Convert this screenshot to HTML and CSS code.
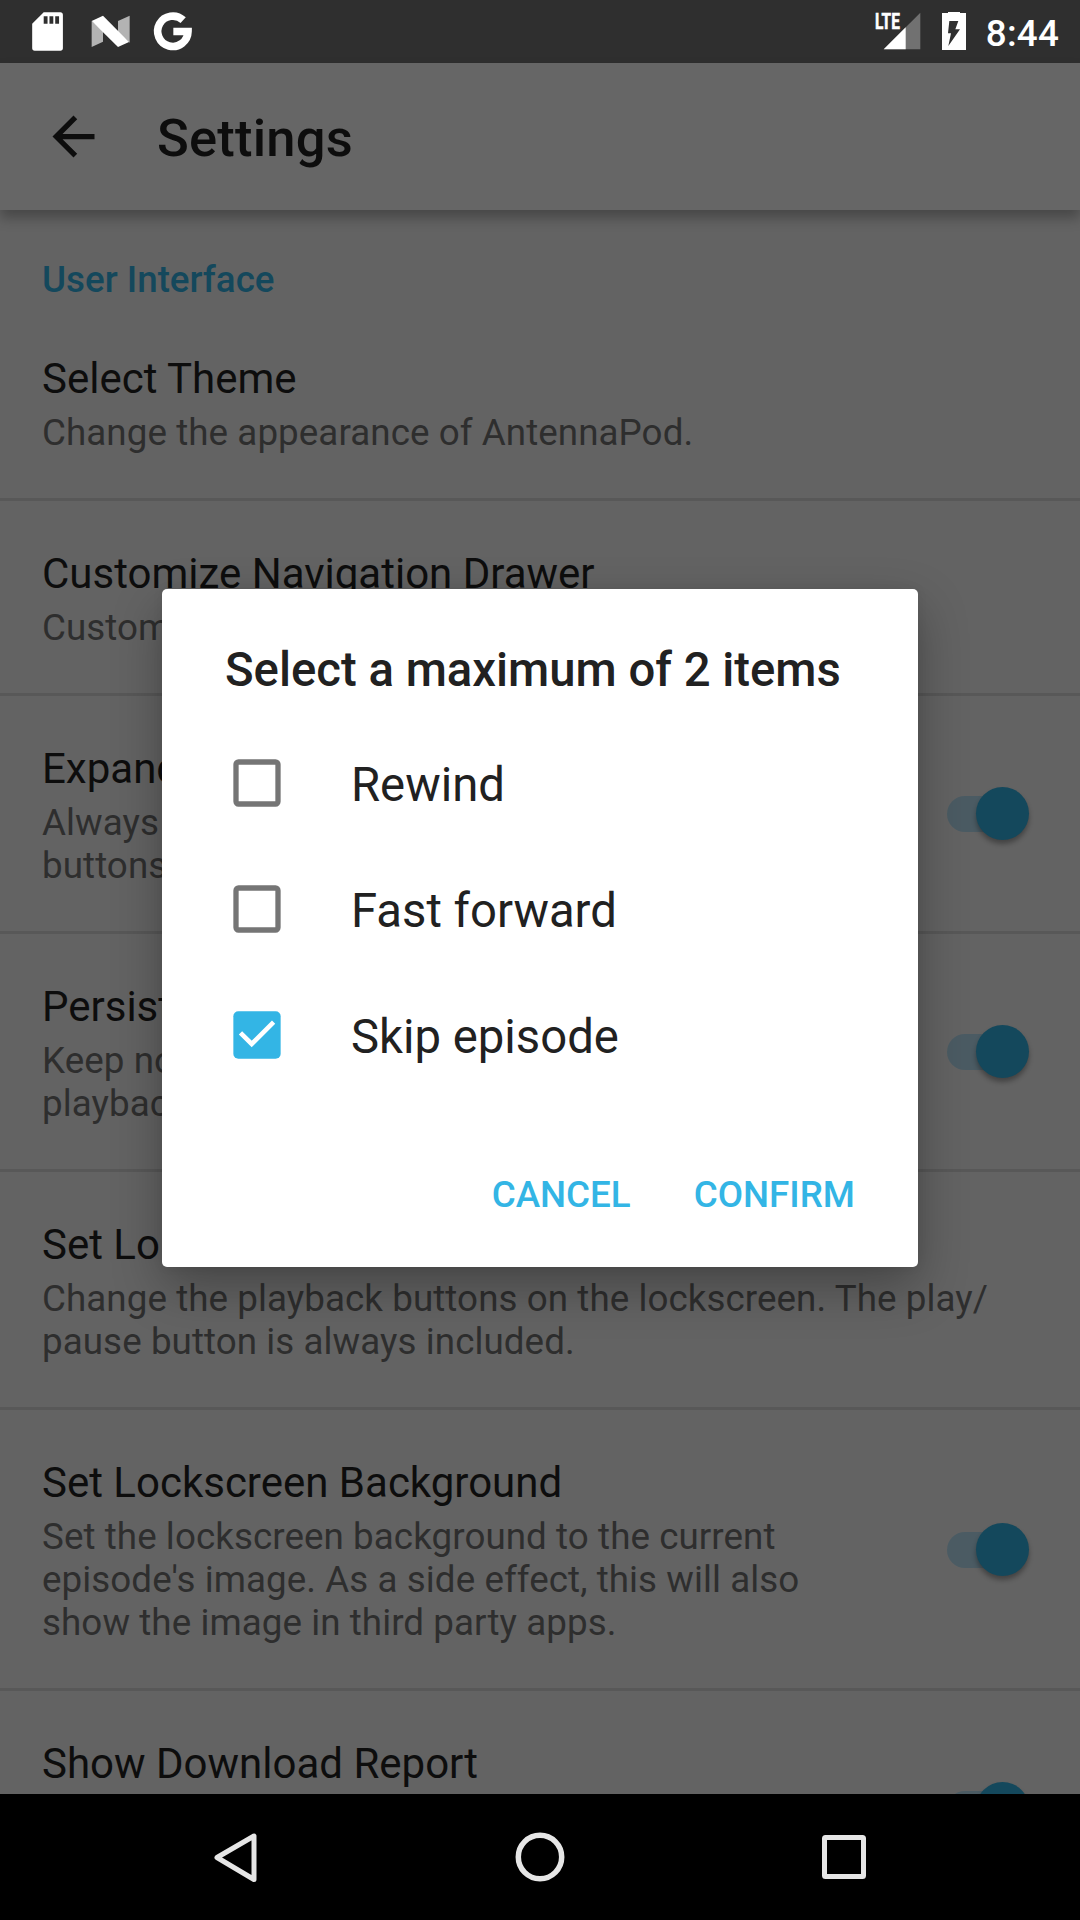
FILE: index.html
```html
<!DOCTYPE html>
<html lang="en">
<head>
<meta charset="utf-8">
<title>Settings</title>
<link rel="stylesheet" href="styles.css">
</head>
<body>
<div class="screen">
  <header class="status-bar">
    <svg class="status-left" width="200" height="63" viewBox="0 0 600 189">
      <path transform="translate(73.5 25.5) scale(5.76)" fill="#fff" d="M18 2h-8L4 8v12.7c0 .8.5 1.3 1.3 1.3h13.4c.8 0 1.3-.5 1.3-1.3V3.3c0-.8-.5-1.3-1.3-1.3zm-6 6h-2V4h2zm3 0h-2V4h2zm3 0h-2V4h2z"/>
      <path fill="#b3b3b3" d="M275 63l34 30v32l-34 16zM354 63l35-16v81l-35-31z"/>
      <path fill="#fff" d="M275 63l34-16 78 79-33 15z"/>
      <path fill="none" stroke="#fff" stroke-width="23" d="M549.500 60.500A45.500 45.500 0 1 0 564 94.500H520"/>
    </svg>
    <svg class="status-right" width="140" height="63" viewBox="0 0 420 189">
      <path fill="#717171" d="M14 148L124 38v110z"/>
      <path fill="#fff" d="M14 148l66-66v66z"/>
      <path fill="#fff" d="M189 39h18v-3h36v3h18v111h-72z"/>
      <path fill="#2f2f2f" d="M211 63h27l-9 25h14l-35 50 8-38h-9z"/>
    </svg>
    <span class="network">LTE</span>
    <span class="clock">8:44</span>
  </header>

  <div class="toolbar">
    <svg class="back" width="63" height="63" viewBox="0 0 24 24"><path fill="#0d0d0d" d="M20 11H7.830l5.590-5.590L12 4l-8 8 8 8 1.410-1.410L7.830 13H20z"/></svg>
    <h1 class="toolbar-title">Settings</h1>
  </div>

  <main class="list">
    <h2 class="category">User Interface</h2>
    <section class="row">
      <div class="text"><div class="title">Select Theme</div><div class="summary">Change the appearance of AntennaPod.</div></div>
    </section>
    <section class="row">
      <div class="text"><div class="title">Customize Navigation Drawer</div><div class="summary">Customize</div></div>
    </section>
    <section class="row">
      <div class="text"><div class="title">Expand</div><div class="summary">Always<br>buttons</div></div>
      <div class="switch"></div>
    </section>
    <section class="row">
      <div class="text"><div class="title">Persist</div><div class="summary">Keep no<br>playback</div></div>
      <div class="switch"></div>
    </section>
    <section class="row">
      <div class="text"><div class="title">Set Lo</div><div class="summary">Change the playback buttons on the lockscreen. The play/<br>pause button is always included.</div></div>
    </section>
    <section class="row">
      <div class="text"><div class="title">Set Lockscreen Background</div><div class="summary">Set the lockscreen background to the current<br>episode's image. As a side effect, this will also<br>show the image in third party apps.</div></div>
      <div class="switch"></div>
    </section>
    <section class="row row-last">
      <div class="text"><div class="title">Show Download Report</div></div>
      <div class="switch"></div>
    </section>
  </main>

  <nav class="nav-bar">
    <svg width="63" height="63" viewBox="0.5 0.5 63 63"><path fill="none" stroke="#e6e6e6" stroke-width="5" stroke-linejoin="round" d="M49.500 10.500v43.500L12.500 32z"/></svg>
    <svg width="63" height="63" viewBox="0.5 0.5 63 63"><circle cx="31.500" cy="31.500" r="21.700" fill="none" stroke="#e6e6e6" stroke-width="5.500"/></svg>
    <svg width="63" height="63" viewBox="0.5 0.5 63 63"><rect x="12" y="12" width="39" height="39" rx="1" fill="none" stroke="#e6e6e6" stroke-width="5"/></svg>
  </nav>

  <div class="overlay">
    <div class="dialog">
      <h2 class="dialog-title">Select a maximum of 2 items</h2>
      <div class="options">
        <div class="option">
          <svg width="48" height="48" viewBox="0 0 48 48"><rect x="3" y="3" width="42" height="42" rx="2.500" fill="none" stroke="#757575" stroke-width="5.300"/></svg>
          <span>Rewind</span>
        </div>
        <div class="option">
          <svg width="48" height="48" viewBox="0 0 48 48"><rect x="3" y="3" width="42" height="42" rx="2.500" fill="none" stroke="#757575" stroke-width="5.300"/></svg>
          <span>Fast forward</span>
        </div>
        <div class="option">
          <svg width="48" height="48" viewBox="0 0 48 48"><rect x="0.350" y="0.350" width="47.300" height="47.300" rx="5" fill="#33b5e5"/><path fill="none" stroke="#fff" stroke-width="4.600" d="M7.500 21.800l11.200 11.200 21.900-21.900"/></svg>
          <span>Skip episode</span>
        </div>
      </div>
      <div class="actions"><span>CANCEL</span><span>CONFIRM</span></div>
    </div>
  </div>
</div>
</body>
</html>
```
FILE: styles.css
```css
* { box-sizing: border-box; }

body {
  margin: 0;
  font-family: Roboto, sans-serif;
  background: #636363;
}

h1, h2 { margin: 0; font-weight: 500; }
svg { display: block; flex: none; }

.screen {
  position: relative;
  width: 1080px;
  height: 1920px;
  overflow: hidden;
  display: flex;
  flex-direction: column;
}

.status-bar {
  position: relative;
  flex: none;
  height: 63px;
  padding-right: 21px;
  background: #2f2f2f;
  display: flex;
  align-items: center;
}

.status-right { margin-left: auto; margin-right: -33px; }

.network {
  position: absolute;
  left: 875px;
  top: 10px;
  font-size: 22px;
  line-height: 24px;
  font-weight: 700;
  color: #fff;
  -webkit-text-stroke: 0.6px #fff;
  transform: scaleX(0.7);
  transform-origin: left;
}

.clock {
  font-size: 36.75px;
  line-height: 43px;
  font-weight: 500;
  letter-spacing: 0.2px;
  color: #fff;
  padding-top: 3px;
}

.toolbar {
  position: relative;
  z-index: 1;
  flex: none;
  height: 147px;
  padding-left: 42px;
  background: #666;
  box-shadow: 0 8px 12px rgba(0, 0, 0, 0.28);
  display: flex;
  align-items: center;
}

.toolbar-title {
  margin-left: 52px;
  padding-top: 2px;
  font-size: 52.5px;
  line-height: 62px;
  letter-spacing: 0.2px;
  color: #0d0d0d;
}

.list { flex: 1; min-height: 0; overflow: hidden; }

.category {
  height: 96px;
  padding: 48px 42px 0;
  font-size: 36.75px;
  line-height: 43px;
  color: #14485c;
}

.row {
  display: flex;
  align-items: center;
  justify-content: space-between;
  padding: 45px 51px 44px 42px;
  border-bottom: 3px solid #585858;
}

.row-last { height: 238px; }
.row-last .text { align-self: flex-start; }

.title {
  font-size: 42px;
  line-height: 56px;
  color: #0d0d0d;
  white-space: nowrap;
}

.summary {
  margin-top: 4px;
  font-size: 36.75px;
  line-height: 43px;
  letter-spacing: 0.07px;
  color: #2e2e2e;
  white-space: nowrap;
}

.switch {
  position: relative;
  flex: none;
  width: 82px;
  height: 36px;
  border-radius: 18px;
  background: linear-gradient(90deg, #4b5b63 60px, transparent 60px);
}

.switch::after {
  content: "";
  position: absolute;
  right: 0;
  top: -9px;
  width: 53px;
  height: 53px;
  border-radius: 50%;
  background: #14485c;
  box-shadow: 0 4px 5px rgba(0, 0, 0, 0.32);
}

.nav-bar {
  position: relative;
  flex: none;
  height: 126px;
  background: #000;
  display: flex;
  align-items: center;
  justify-content: center;
  gap: 241px;
}

.overlay {
  position: absolute;
  inset: 63px 0 127px;
  display: flex;
  align-items: center;
  justify-content: center;
}

.dialog {
  width: 756px;
  height: 678px;
  padding: 53px 63px 0;
  border-radius: 5px;
  background: #fff;
  box-shadow: 0 20px 50px rgba(0, 0, 0, 0.3), 0 0 12px rgba(0, 0, 0, 0.06);
  color: #212121;
}

.dialog-title {
  font-size: 47.25px;
  line-height: 56px;
  white-space: nowrap;
}

.options { padding-top: 22px; }

.option {
  height: 126px;
  display: flex;
  align-items: center;
  gap: 70px;
  padding-left: 8px;
  font-size: 47.25px;
  line-height: 56px;
}

.option span { padding-top: 4px; }

.actions {
  display: flex;
  justify-content: flex-end;
  gap: 63px;
  padding-top: 75px;
  font-size: 36.75px;
  line-height: 43px;
  font-weight: 500;
  color: #33b5e5;
}
```
